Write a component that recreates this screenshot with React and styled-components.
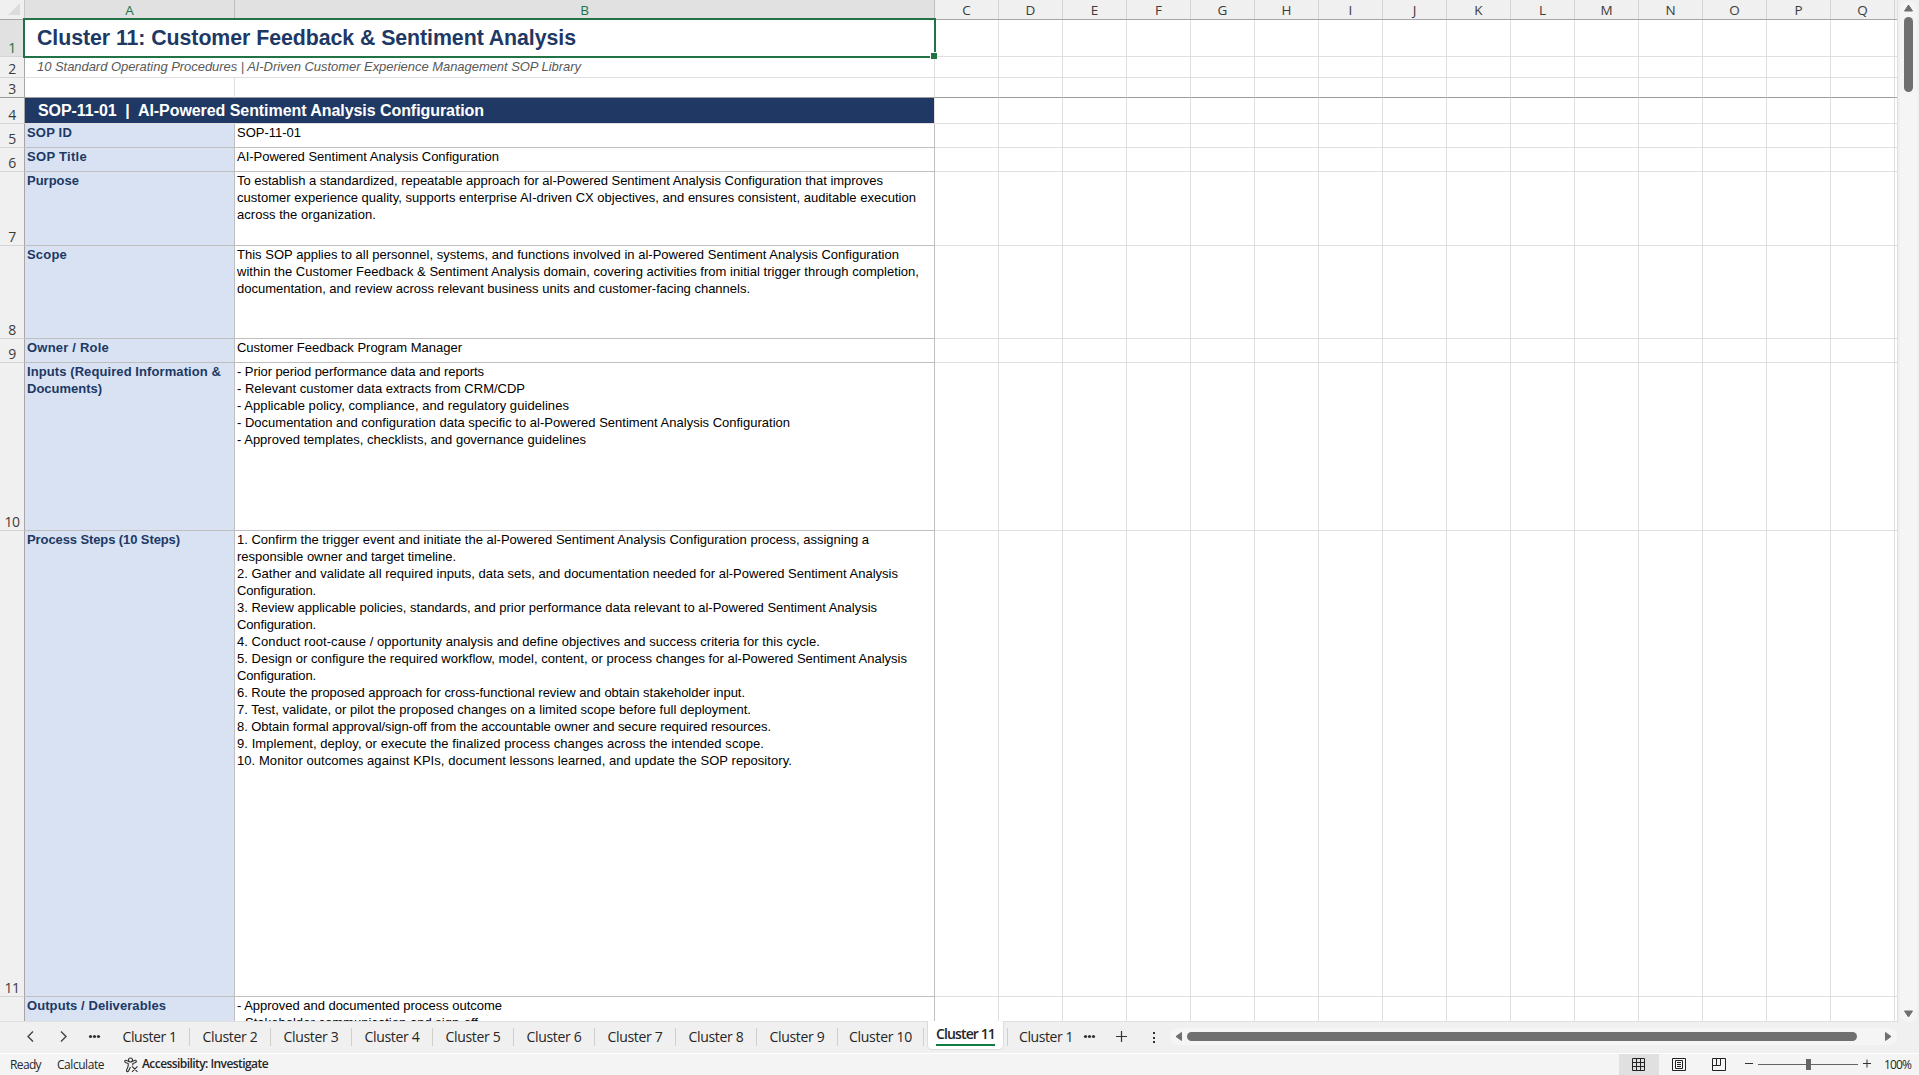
import React from 'react'
import styled, { createGlobalStyle } from 'styled-components'

const GlobalStyle = createGlobalStyle`
  * {
    box-sizing: border-box;
  }

  body {
    margin: 0;
    overflow: hidden;
    background: #f0f0f0;
  }
`

const colors = {
  green: '#217346',
  navy: '#203864',
  label: '#d9e2f3',
  grid: '#dfdfdf',
  border: '#bfbfbf',
  chrome: '#f0f0f0',
  thumb: '#707070'
}

const ui = "'Open Sans', 'Noto Sans', sans-serif"
const arial = "'Liberation Sans', Arial, sans-serif"

const letters = 'CDEFGHIJKLMNOPQ'.split('')

// every text line is [text, width in px]
const rows = [
  {n: 5, h: 24, label: [['SOP ID', 45]], lines: [['SOP-11-01', 64]]},
  {n: 6, h: 24, label: [['SOP Title', 60]], lines: [['AI-Powered Sentiment Analysis Configuration', 262]]},
  {n: 7, h: 74, label: [['Purpose', 52]], lines: [
    ['To establish a standardized, repeatable approach for al-Powered Sentiment Analysis Configuration that improves', 646],
    ['customer experience quality, supports enterprise AI-driven CX objectives, and ensures consistent, auditable execution', 679],
    ['across the organization.', 139]
  ]},
  {n: 8, h: 93, label: [['Scope', 40]], lines: [
    ['This SOP applies to all personnel, systems, and functions involved in al-Powered Sentiment Analysis Configuration', 662],
    ['within the Customer Feedback & Sentiment Analysis domain, covering activities from initial trigger through completion,', 682],
    ['documentation, and review across relevant business units and customer-facing channels.', 513]
  ]},
  {n: 9, h: 24, label: [['Owner / Role', 82]], lines: [['Customer Feedback Program Manager', 225]]},
  {n: 10, h: 168, label: [['Inputs (Required Information &', 194], ['Documents)', 75]], lines: [
    ['- Prior period performance data and reports', 247],
    ['- Relevant customer data extracts from CRM/CDP', 288],
    ['- Applicable policy, compliance, and regulatory guidelines', 332],
    ['- Documentation and configuration data specific to al-Powered Sentiment Analysis Configuration', 553],
    ['- Approved templates, checklists, and governance guidelines', 349]
  ]},
  {n: 11, h: 466, label: [['Process Steps (10 Steps)', 153]], lines: [
    ['1. Confirm the trigger event and initiate the al-Powered Sentiment Analysis Configuration process, assigning a', 632],
    ['responsible owner and target timeline.', 219],
    ['2. Gather and validate all required inputs, data sets, and documentation needed for al-Powered Sentiment Analysis', 661],
    ['Configuration.', 79],
    ['3. Review applicable policies, standards, and prior performance data relevant to al-Powered Sentiment Analysis', 640],
    ['Configuration.', 79],
    ['4. Conduct root-cause / opportunity analysis and define objectives and success criteria for this cycle.', 583],
    ['5. Design or configure the required workflow, model, content, or process changes for al-Powered Sentiment Analysis', 670],
    ['Configuration.', 79],
    ['6. Route the proposed approach for cross-functional review and obtain stakeholder input.', 508],
    ['7. Test, validate, or pilot the proposed changes on a limited scope before full deployment.', 514],
    ['8. Obtain formal approval/sign-off from the accountable owner and secure required resources.', 534],
    ['9. Implement, deploy, or execute the finalized process changes across the intended scope.', 527],
    ['10. Monitor outcomes against KPIs, document lessons learned, and update the SOP repository.', 555]
  ]},
  {n: '', h: 25, label: [['Outputs / Deliverables', 139]], lines: [
    ['- Approved and documented process outcome', 265],
    ['- Stakeholder communication and sign-off', 241]
  ]}
]

const Window = styled.div`
  width: 1919px;
  height: 1075px;
  display: flex;
  flex-direction: column;
  background: ${colors.chrome};
  font-family: ${ui};
  color: #262626;
`

const Workspace = styled.div`
  height: 1022px;
  display: flex;
`

const Sheet = styled.div`
  width: 1898px;
  overflow: hidden;
  border-right: 1px solid ${colors.grid};
  border-bottom: 1px solid ${colors.grid};
  background: white;
`

const Row = styled.div`
  height: ${(p) => p.$h}px;
  display: flex;
  overflow: hidden;
`

const TitleRow = styled(Row)`
  overflow: visible;
`

const HeadRow = styled(Row)`
  background: ${colors.chrome};
  border-bottom: 1px solid #a6a6a6;
`

const Corner = styled.div`
  width: 25px;
  border-right: 1px solid #c8c8c8;
  display: flex;
  justify-content: flex-end;
  align-items: flex-end;
  padding: 0 3px 3px 0;
`

const ColHead = styled.div`
  width: ${(p) => p.$w}px;
  flex: none;
  padding-top: 1px;
  border-right: 1px solid ${(p) => p.$on ? '#bdbdbd' : '#d4d4d4'};
  background: ${(p) => p.$on ? '#e1e1e1' : colors.chrome};
  color: ${(p) => p.$on ? colors.green : '#3c3c3c'};
  font-size: 13.5px;
  line-height: 19px;
  text-align: center;
`

const RowHead = styled.div`
  width: 25px;
  flex: none;
  display: flex;
  align-items: flex-end;
  justify-content: center;
  border-right: 1px solid #a6a6a6;
  border-bottom: 1px solid ${(p) => p.$freeze ? '#9b9b9b' : '#d4d4d4'};
  background: ${(p) => p.$on ? '#e1e1e1' : colors.chrome};
  color: ${(p) => p.$on ? colors.green : '#3c3c3c'};
  font-size: 14px;
  line-height: 17px;
  letter-spacing: -0.5px;
`

const Cell = styled.div`
  width: ${(p) => p.$w || 64}px;
  flex: none;
  border-right: 1px solid ${colors.grid};
  border-bottom: 1px solid ${(p) => p.$freeze ? '#9b9b9b' : colors.grid};
`

const TextCell = styled(Cell)`
  padding-left: 2px;
  border-color: ${colors.border};
  background: ${(p) => p.$label ? colors.label : 'white'};
  color: ${(p) => p.$label ? colors.navy : 'black'};
  font-family: ${arial};
  font-size: 13px;
  font-weight: ${(p) => p.$label ? 'bold' : 'normal'};
  line-height: 17px;
`

const TitleCell = styled(Cell)`
  width: 910px;
  position: relative;
  padding-left: 12px;
  color: ${colors.navy};
  font-family: ${arial};
  font-size: 21.33px;
  font-weight: bold;
  line-height: 36px;
`

const Selection = styled.div`
  position: absolute;
  top: -2px;
  left: -2px;
  width: 913px;
  height: 40px;
  border: 2px solid ${colors.green};
  z-index: 2;

  &::after {
    content: '';
    position: absolute;
    right: -3px;
    bottom: -3px;
    width: 6px;
    height: 6px;
    border: 1px solid white;
    border-width: 1px 0 0 1px;
    background: ${colors.green};
  }
`

const SubtitleCell = styled(Cell)`
  width: 910px;
  padding-left: 12px;
  color: #595959;
  font-family: ${arial};
  font-size: 13px;
  font-style: italic;
  line-height: 19px;
`

const BannerCell = styled(Cell)`
  width: 910px;
  padding-left: 13px;
  background: ${colors.navy};
  background-clip: padding-box;
  color: white;
  font-family: ${arial};
  font-size: 16px;
  font-weight: bold;
  line-height: 26px;
`

const Line = styled.div`
  width: max-content;
  white-space: pre;
`

const VScroll = styled.div`
  width: 17px;
  margin: 1px 0 0 2px;
  height: 1021px;
  display: flex;
  flex-direction: column;
  align-items: center;
  justify-content: space-between;
  padding: 3px 0 4px;
  border-radius: 8px;
  background: #f5f5f5;
`

const VThumb = styled.div`
  width: 9px;
  height: 75px;
  margin-top: 5px;
  border-radius: 5px;
  background: ${colors.thumb};
`

const Stack = styled.div`
  display: flex;
  flex-direction: column;
  align-items: center;
`

const TabBar = styled.div`
  height: 31px;
  display: flex;
  align-items: center;
  padding-bottom: 2px;
`

const NavIcons = styled.div`
  width: 107px;
  height: 29px;
  flex: none;
  display: flex;
  align-items: center;
  padding-left: 25px;
`

const Tab = styled.div`
  width: ${(p) => p.$w || 81}px;
  height: 18px;
  flex: none;
  display: flex;
  justify-content: center;
  margin-top: 1px;
  padding-left: ${(p) => p.$shift || 0}px;
  border-right: 1px solid #cfcfcf;
  font-size: 14px;
  line-height: 18px;
`

const ActiveTab = styled.div`
  width: 77px;
  height: 29px;
  flex: none;
  align-self: flex-start;
  position: relative;
  margin: -1px 3px 0;
  padding: 3px 8px 0;
  border: 1px solid #dcdcdc;
  border-top: 0;
  border-radius: 0 0 5px 5px;
  background: white;
  font-size: 14px;
  font-weight: 600;
  line-height: 20px;
`

const Underline = styled.div`
  border-bottom: 2px solid #107c41;
`

const LastTab = styled.div`
  height: 18px;
  width: 76px;
  flex: none;
  margin-top: 1px;
  padding-left: 11px;
  border-left: 1px solid #cfcfcf;
  font-size: 14px;
  line-height: 18px;
`

const TabTools = styled.div`
  height: 29px;
  width: 87px;
  flex: none;
  display: flex;
  align-items: center;
`

const HScroll = styled.div`
  width: 727px;
  height: 17px;
  flex: none;
  display: flex;
  align-items: center;
  padding: 0 5px;
  border-radius: 8px;
  background: #f5f5f5;
`

const HThumb = styled.div`
  width: 670px;
  height: 9px;
  margin: 0 28px 0 5px;
  border-radius: 5px;
  background: ${colors.thumb};
`

const StatusBar = styled.div`
  height: 22px;
  display: flex;
  align-items: center;
  border-top: 1px solid white;
  background: #f4f4f4;
  font-size: 12px;
`

const StatusText = styled.div`
  margin-left: ${(p) => p.$gap}px;
  padding-bottom: ${(p) => p.$bold ? 1 : 0}px;
  font-weight: ${(p) => p.$bold ? 600 : 400};
  line-height: 18px;

  & svg {
    display: block;
  }
`

const Views = styled.div`
  margin-left: auto;
  display: flex;
`

const ViewButton = styled.div`
  width: 40px;
  height: 21px;
  display: flex;
  align-items: center;
  justify-content: center;
  background: ${(p) => p.$on ? '#e0e0e0' : 'transparent'};
`

const Zoom = styled.div`
  width: 180px;
  display: flex;
  align-items: center;
`

// spreads the characters so that a line takes exactly its measured width
function Fit({line}) {
  const ref = React.useRef(null)
  const [spacing, setSpacing] = React.useState(0)

  React.useLayoutEffect(() => {
    const natural = ref.current.getBoundingClientRect().width
    setSpacing((line[1] - natural) / line[0].length)
  }, [])

  return <Line ref={ref} style={{letterSpacing: spacing + 'px'}}>{line[0]}</Line>
}

const Blanks = (props) => (
  <>
    {letters.map((l) => <Cell key={l} $freeze={props.freeze}/>)}
    <Cell $w={4} $freeze={props.freeze}/>
  </>
)

const ArrowSvg = styled.svg`
  flex: none;
`

const Arrow = ({d, w, h}) => (
  <ArrowSvg width={w} height={h}>
    <path d={d} fill={colors.thumb} stroke={colors.thumb} strokeLinejoin='round'/>
  </ArrowSvg>
)

const Grid = () => (
  <Sheet>
    <HeadRow $h={20}>
      <Corner>
        <svg width='13' height='13'><path d='M12 0V12H0Z' fill='#dcdcdc'/></svg>
      </Corner>
      <ColHead $w={210} $on>A</ColHead>
      <ColHead $w={700} $on>B</ColHead>
      {letters.map((l) => <ColHead key={l} $w={64}>{l}</ColHead>)}
    </HeadRow>
    <TitleRow $h={37}>
      <RowHead $on>1</RowHead>
      <TitleCell>
        <Fit line={['Cluster 11: Customer Feedback & Sentiment Analysis', 539]}/>
        <Selection/>
      </TitleCell>
      <Blanks/>
    </TitleRow>
    <Row $h={21}>
      <RowHead>2</RowHead>
      <SubtitleCell>
        <Fit line={['10 Standard Operating Procedures | AI-Driven Customer Experience Management SOP Library', 544]}/>
      </SubtitleCell>
      <Blanks/>
    </Row>
    <Row $h={20}>
      <RowHead $freeze>3</RowHead>
      <Cell $w={210} $freeze/>
      <Cell $w={700} $freeze/>
      <Blanks freeze/>
    </Row>
    <Row $h={26}>
      <RowHead>4</RowHead>
      <BannerCell>
        <Fit line={['SOP-11-01  |  AI-Powered Sentiment Analysis Configuration', 446]}/>
      </BannerCell>
      <Blanks/>
    </Row>
    {rows.map((row) => (
      <Row key={row.n} $h={row.h}>
        <RowHead>{row.n}</RowHead>
        <TextCell $w={210} $label>
          {row.label.map((line, i) => <Fit key={i} line={line}/>)}
        </TextCell>
        <TextCell $w={700}>
          {row.lines.map((line, i) => <Fit key={i} line={line}/>)}
        </TextCell>
        <Blanks/>
      </Row>
    ))}
  </Sheet>
)

const Tabs = () => (
  <TabBar>
    <NavIcons>
      <svg width='82' height='15' fill='none' stroke='#444' strokeWidth='1.4'>
        <path d='M8 2.500L3 7.500L8 12.500M36 2.500L41 7.500L36 12.500'/>
        <g fill='#333' stroke='none'>
          <circle cx='65.500' cy='7.500' r='1.6'/>
          <circle cx='69.500' cy='7.500' r='1.6'/>
          <circle cx='73.500' cy='7.500' r='1.6'/>
        </g>
      </svg>
    </NavIcons>
    <Tab $w={83} $shift={3}><Fit line={['Cluster 1', 54]}/></Tab>
    {[2, 3, 4, 5, 6, 7, 8, 9].map((n) => (
      <Tab key={n}><Fit line={['Cluster ' + n, 55]}/></Tab>
    ))}
    <Tab $w={86}><Fit line={['Cluster 10', 63]}/></Tab>
    <ActiveTab>
      <Underline><Fit line={['Cluster 11', 59]}/></Underline>
    </ActiveTab>
    <LastTab><Fit line={['Cluster 1', 54]}/></LastTab>
    <TabTools>
      <svg width='87' height='17' fill='#333'>
        <circle cx='2.500' cy='8.500' r='1.6'/>
        <circle cx='6.500' cy='8.500' r='1.6'/>
        <circle cx='10.500' cy='8.500' r='1.6'/>
        <path d='M38.500 3V14M33 8.500H44' stroke='#333' strokeWidth='1.2'/>
        <path d='M70 4h2v2h-2zM70 9h2v2h-2zM70 13h2v2h-2z'/>
      </svg>
    </TabTools>
    <HScroll>
      <Arrow w={7} h={9} d='M6.500 .5V8.500L1 4.500Z'/>
      <HThumb/>
      <Arrow w={7} h={9} d='M.5 .5V8.500L6 4.500Z'/>
    </HScroll>
  </TabBar>
)

const Status = () => (
  <StatusBar>
    <StatusText $gap={10}><Fit line={['Ready', 31]}/></StatusText>
    <StatusText $gap={16}><Fit line={['Calculate', 47]}/></StatusText>
    <StatusText $gap={20}>
      <svg width='15' height='18' fill='none' stroke='#333' strokeWidth='1.1'>
        <circle cx='6.500' cy='4' r='2'/>
        <path d='M5 5.500L2 4.300C.5 4 .3 5.900 1.500 6.400L4.200 7.500V10L2.500 14.300C2.300 15.800 4 16.100 4.500 15L6.500 11M8 5.500L11 4.300C12.500 4 12.800 5.900 11.500 6.400L8.800 7.500V9.500M8 10.300L13.500 15.800M13.500 10.300L8 15.800'/>
      </svg>
    </StatusText>
    <StatusText $gap={3} $bold><Fit line={['Accessibility: Investigate', 126]}/></StatusText>
    <Views>
      <ViewButton $on>
        <svg width='14' height='15' fill='none' stroke='#222'>
          <path d='M.5 1.500H12.500V13.500H.5ZM.5 5.500H12.500M.5 9.500H12.500M4.500 1.500V13.500M8.500 1.500V13.500'/>
        </svg>
      </ViewButton>
      <ViewButton>
        <svg width='14' height='15' fill='none' stroke='#222'>
          <path d='M.5 1.500H13.500V13.500H.5ZM3.500 3.500H10.500V11.500H3.500ZM5 5.500H9M5 7.500H9M5 9.500H9'/>
        </svg>
      </ViewButton>
      <ViewButton>
        <svg width='14' height='15' fill='none' stroke='#222'>
          <path d='M.5 1.500H13.500V13.500H.5ZM.5 8.500H8.500V1.500M4.500 1.500V8.500'/>
        </svg>
      </ViewButton>
    </Views>
    <Zoom>
      <svg width='140' height='15' stroke='#333'>
        <path d='M6 6.500H14M124 6.500H132M128 2.500V10.500'/>
        <path d='M19 7.500H119' stroke='#666'/>
        <path d='M67 2h5v11h-5z' fill='#666' stroke='none'/>
      </svg>
      <StatusText $gap={5}><Fit line={['100%', 27]}/></StatusText>
    </Zoom>
  </StatusBar>
)

const App = () => (
  <Window>
    <GlobalStyle/>
    <Workspace>
      <Grid/>
      <VScroll>
        <Stack>
          <Arrow w={9} h={8} d='M4.500 1L8.500 7H.5Z'/>
          <VThumb/>
        </Stack>
        <Arrow w={9} h={8} d='M4.500 7L8.500 1H.5Z'/>
      </VScroll>
    </Workspace>
    <Tabs/>
    <Status/>
  </Window>
)

export default App
